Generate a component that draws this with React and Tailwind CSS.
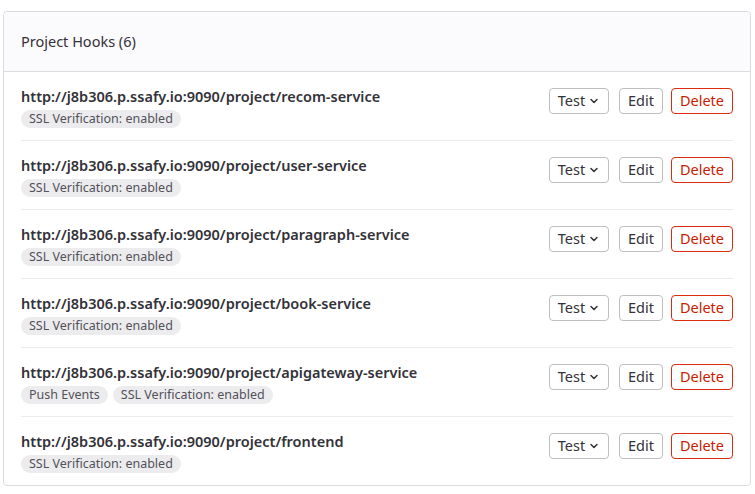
import { ChevronDown } from 'lucide-react'

const hooks = [
  { url: 'http://j8b306.p.ssafy.io:9090/project/recom-service', badges: ['SSL Verification: enabled'] },
  { url: 'http://j8b306.p.ssafy.io:9090/project/user-service', badges: ['SSL Verification: enabled'] },
  { url: 'http://j8b306.p.ssafy.io:9090/project/paragraph-service', badges: ['SSL Verification: enabled'] },
  { url: 'http://j8b306.p.ssafy.io:9090/project/book-service', badges: ['SSL Verification: enabled'] },
  { url: 'http://j8b306.p.ssafy.io:9090/project/apigateway-service', badges: ['Push Events', 'SSL Verification: enabled'] },
  { url: 'http://j8b306.p.ssafy.io:9090/project/frontend', badges: ['SSL Verification: enabled'] },
]

function HookRow({ hook, last }) {
  return (
    <li className={`mx-[17px] flex items-start justify-between pt-[14px] pb-[12px] ${last ? '' : 'border-b border-[#ececef]'}`}>
      <div>
        <div className="text-[14.5px] leading-[20px] font-semibold text-[#333238]">{hook.url}</div>
        <div className="mt-[4px] flex gap-[5px]">
          {hook.badges.map(b => (
            <span key={b} className="h-[18px] rounded-full bg-[#ececef] px-[8px] text-[12.5px] leading-[18px] text-[#535158]">{b}</span>
          ))}
        </div>
      </div>
      <div className="mt-[2px] flex">
        <button className="flex h-[26px] w-[60px] items-center justify-center gap-[3px] rounded-[4px] border border-[#bfbfc3] bg-white text-[14.5px] text-[#333238]">
          Test
          <ChevronDown size={12} strokeWidth={3} />
        </button>
        <button className="ml-[10px] h-[26px] w-[44px] rounded-[4px] border border-[#bfbfc3] bg-white text-[14.5px] text-[#333238]">Edit</button>
        <button className="ml-[8px] h-[26px] w-[62px] rounded-[4px] border border-[#dd2b0e] bg-white text-[14.5px] text-[#c91c00]">Delete</button>
      </div>
    </li>
  )
}

export default function App() {
  return (
    <div className="min-h-[494px] bg-white pt-[11px] pl-[3px]" style={{ fontFamily: '"Noto Sans", "Open Sans", sans-serif' }}>
      <div className="w-[748px] rounded-[4px] border border-[#dcdcde] bg-white">
        <div className="flex h-[60px] items-center rounded-t-[4px] border-b border-[#dcdcde] bg-[#fbfafd] px-[17px] text-[14.5px] text-[#333238]">
          Project Hooks (6)
        </div>
        <ul>
          {hooks.map((h, i) => (
            <HookRow key={h.url} hook={h} last={i === hooks.length - 1} />
          ))}
        </ul>
      </div>
    </div>
  )
}
